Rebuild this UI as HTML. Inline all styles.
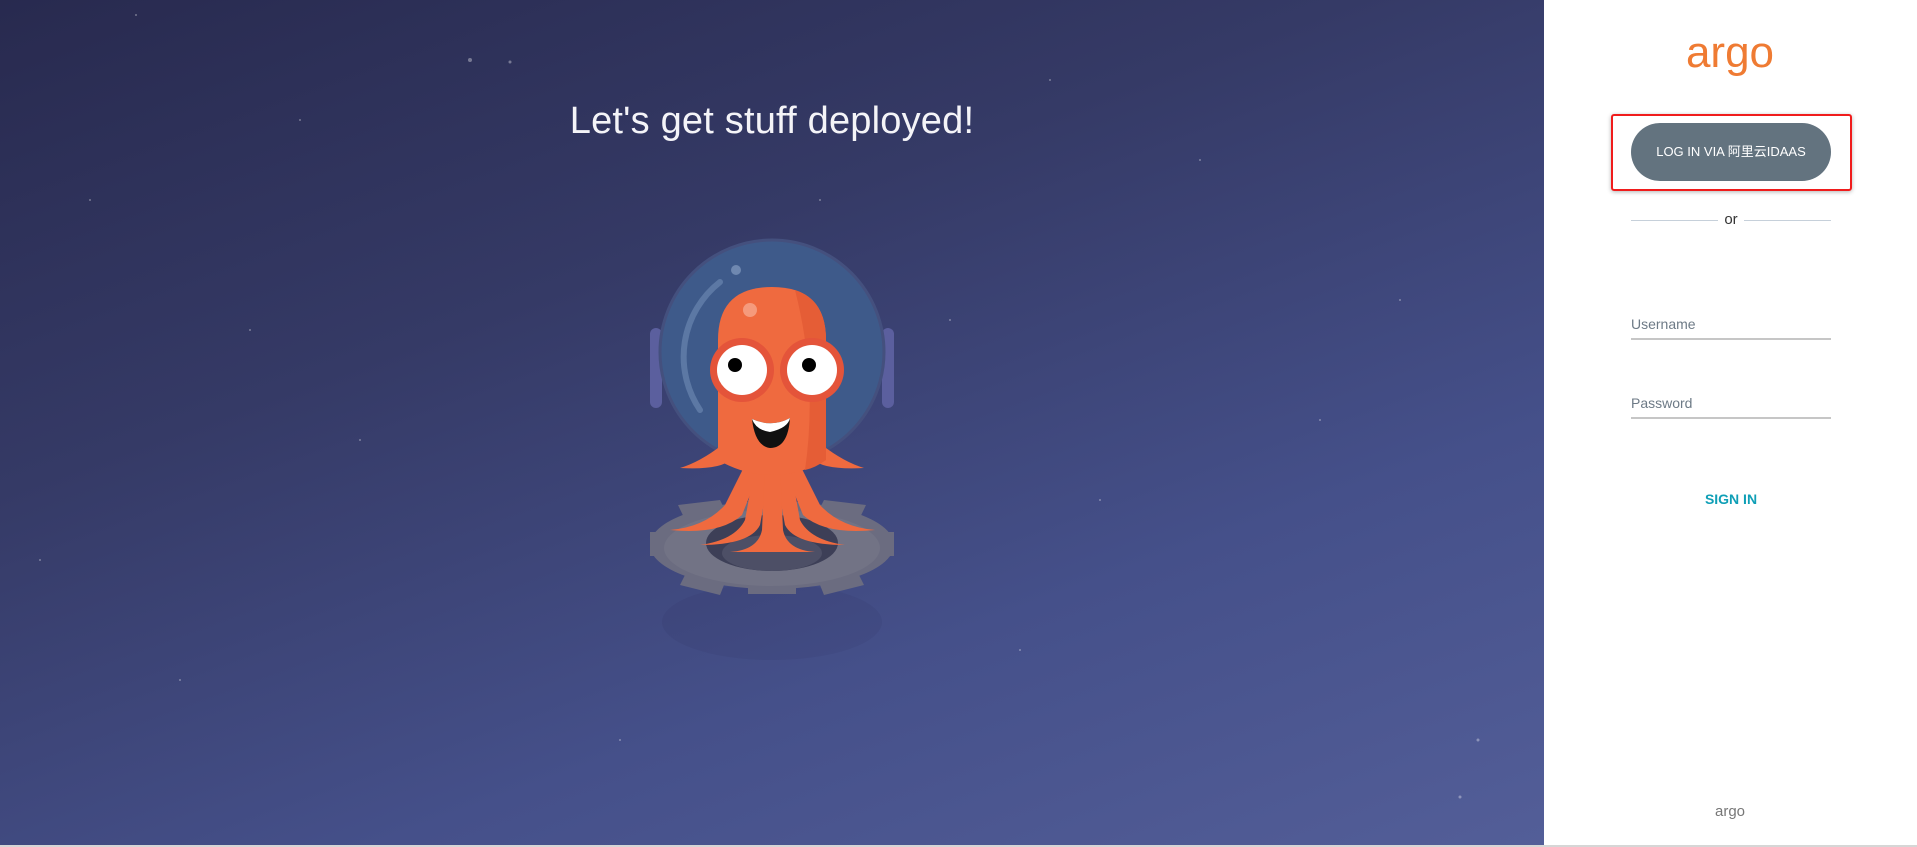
<!DOCTYPE html>
<html><head><meta charset="utf-8"><style>
html,body{margin:0;padding:0;width:1917px;height:847px;overflow:hidden;font-family:"Liberation Sans","Noto Sans CJK SC",sans-serif;}
.bg{position:absolute;left:0;top:0;width:1544px;height:845px;background:linear-gradient(160deg,#282a4f 0%,#353a66 35%,#45508a 70%,#535e98 100%);}
.title{position:absolute;left:0;width:1544px;top:100px;text-align:center;font-size:38px;color:#f4f4f8;font-weight:normal;letter-spacing:0.2px;}
.panel{position:absolute;left:1544px;top:0;width:373px;height:845px;background:#fff;}
.foot{position:absolute;left:0;top:845px;width:1917px;height:2px;background:#d6d6d6;}
.btn{position:absolute;left:1631px;top:123px;width:200px;height:58px;border-radius:29px;background:#63737f;color:#fff;font-size:13px;text-align:center;line-height:58px;}
.red{position:absolute;left:1611px;top:114px;width:237px;height:73px;border:2px solid #f01c1c;border-radius:3px;box-shadow:0 1px 4px rgba(0,0,0,.3);}
.line{position:absolute;top:220px;height:1px;background:#c6d0da;}
.or{position:absolute;left:1718px;width:26px;top:211px;text-align:center;font-size:15px;color:#333;}
.lbl{position:absolute;left:1631px;font-size:14px;color:#6d7a86;}
.ul{position:absolute;left:1631px;width:200px;height:2px;background:#c6c6c6;}
.sign{position:absolute;left:1631px;width:200px;text-align:center;top:491px;font-size:14px;color:#0f9fb6;font-weight:bold;}
</style></head><body>
<div class="bg"></div>
<svg style="position:absolute;left:0;top:0" width="1544" height="845">
<g fill="#fff" opacity="0.35">
<circle cx="136" cy="15" r="1"/><circle cx="470" cy="60" r="2"/><circle cx="510" cy="62" r="1.5"/><circle cx="300" cy="120" r="1"/><circle cx="90" cy="200" r="1"/><circle cx="1050" cy="80" r="1"/><circle cx="1200" cy="160" r="1"/><circle cx="1400" cy="300" r="1"/><circle cx="360" cy="440" r="1"/><circle cx="1100" cy="500" r="1"/><circle cx="180" cy="680" r="1"/><circle cx="1478" cy="740" r="1.5"/><circle cx="1460" cy="797" r="1.5"/><circle cx="1020" cy="650" r="1"/><circle cx="620" cy="740" r="1"/><circle cx="250" cy="330" r="1"/><circle cx="1320" cy="420" r="1"/><circle cx="820" cy="200" r="1"/><circle cx="40" cy="560" r="1"/><circle cx="950" cy="320" r="1"/>
</g>
<g opacity="0.07" fill="#1e2245">
<ellipse cx="772" cy="622" rx="110" ry="38"/>
</g>
<rect x="650" y="328" width="12" height="80" rx="6" fill="#5b5f9e"/>
<rect x="882" y="328" width="12" height="80" rx="6" fill="#5b5f9e"/>
<circle cx="772" cy="352" r="112" fill="#3e5a8a" stroke="#44507e" stroke-width="3"/>
<path d="M720 282 A95 95 0 0 0 700 410" stroke="#5c78a4" stroke-width="6" fill="none" stroke-linecap="round"/>
<circle cx="736" cy="270" r="5" fill="#6f88b0"/>
<g fill="#6b6c80">
<ellipse cx="772" cy="545" rx="122" ry="44"/>
<rect x="650" y="532" width="244" height="24"/>
<rect x="748" y="500" width="48" height="94"/>
<polygon points="678,505 720,500 730,520 690,530"/><polygon points="866,505 824,500 814,520 854,530"/>
<polygon points="680,585 720,595 730,570 690,565"/><polygon points="864,585 824,595 814,570 854,565"/>
</g>
<ellipse cx="772" cy="548" rx="108" ry="38" fill="#727385"/>
<ellipse cx="772" cy="543" rx="66" ry="28" fill="#3d3f57"/>
<ellipse cx="772" cy="553" rx="50" ry="18" fill="#4d4f66"/>
<g fill="#ef6a3f">
<path d="M745 465 L725 505 Q705 527 670 530 Q720 535 742 515 L760 470Z"/>
<path d="M755 465 L745 520 Q735 540 700 545 Q750 545 760 525 L770 470Z"/>
<path d="M800 465 L820 505 Q840 527 875 530 Q825 535 803 515 L785 470Z"/>
<path d="M790 465 L800 520 Q810 540 845 545 Q795 545 785 525 L775 470Z"/>
<path d="M765 465 L762 530 Q758 550 730 552 L815 552 Q787 550 783 530 L780 465Z"/>
<path d="M722 445 Q700 462 680 468 Q720 470 730 460Z"/><path d="M822 445 Q844 462 864 468 Q824 470 814 460Z"/>
</g>
<path d="M718 340 Q718 287 772 287 Q826 287 826 340 L826 460 Q800 475 772 475 Q744 475 718 460Z" fill="#ef6a3f"/>
<path d="M795 290 Q826 300 826 340 L826 460 Q815 468 805 470 Q818 380 795 290Z" fill="#e55d36"/>
<circle cx="750" cy="310" r="7" fill="#f59a7c"/>
<circle cx="742" cy="370" r="32" fill="#e4543a"/><circle cx="742" cy="370" r="25" fill="#fff"/><circle cx="735" cy="365" r="7" fill="#000"/>
<circle cx="812" cy="370" r="32" fill="#e4543a"/><circle cx="812" cy="370" r="25" fill="#fff"/><circle cx="809" cy="365" r="7" fill="#000"/>
<path d="M752 419 Q772 428 790 418 Q788 448 770 448 Q755 446 752 419Z" fill="#111"/>
<path d="M752 419 Q772 428 790 418 Q788 428 770 432 Q756 430 752 419Z" fill="#fff"/>
</svg>
<div class="title">Let's get stuff deployed!</div>
<div class="panel"></div>
<div class="foot"></div>
<div style="position:absolute;left:1680px;top:28px;width:100px;text-align:center;font-size:44px;color:#ef7b33;font-weight:normal;letter-spacing:0px;">argo</div>
<div class="red"></div>
<div class="btn">LOG IN VIA 阿里云IDAAS</div>
<div class="line" style="left:1631px;width:87px"></div>
<div class="line" style="left:1744px;width:87px"></div>
<div class="or">or</div>
<div class="lbl" style="top:316px">Username</div>
<div class="ul" style="top:338px"></div>
<div class="lbl" style="top:395px">Password</div>
<div class="ul" style="top:417px"></div>
<div class="sign">SIGN IN</div>
<div style="position:absolute;left:1680px;top:803px;width:100px;text-align:center;font-size:15px;color:#777;">argo</div>
</body></html>
